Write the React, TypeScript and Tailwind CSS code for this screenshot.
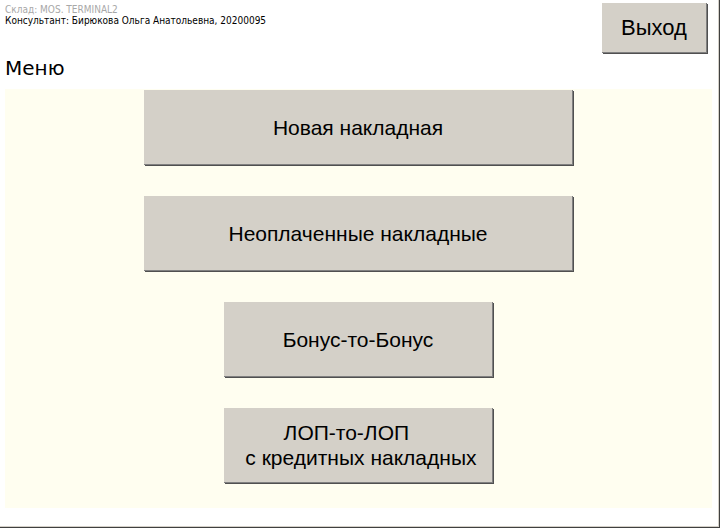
import React from "react";

const items = [
  { label: "Новая накладная", wide: true },
  { label: "Неоплаченные накладные", wide: true },
  { label: "Бонус-то-Бонус", wide: false },
  { label: "ЛОП-то-ЛОП    \n с кредитных накладных", wide: false },
];

function MenuButton({ label, wide }: { label: string; wide: boolean }) {
  return (
    <button
      className={`${wide ? "w-[429px]" : "w-[269px]"} h-[75px] bg-[#d4d0c8] border-r border-b border-[#808080] shadow-[1px_1px_0_#505050] text-[21px] leading-[25px] text-black whitespace-pre font-['Liberation_Sans',Arial,sans-serif] flex items-center justify-center text-center`}
    >
      {label}
    </button>
  );
}

export default function App() {
  return (
    <div className="w-[720px] h-[528px] border-r border-b border-[#404040] bg-white overflow-hidden">
      <div className="h-full border-r border-b border-[#d4d0c8] flex flex-col">
        <div className="flex justify-between items-start pt-[3px] pr-[11px]">
          <div className="pl-[5px] pt-[1px] font-['DejaVu_Sans_Condensed','DejaVu_Sans',Verdana,sans-serif] [font-stretch:semi-condensed] text-[10px] leading-[11px]">
            <div className="text-[#a8a8a8]">Склад: MOS. TERMINAL2</div>
            <div className="text-black">Консультант: Бирюкова Ольга Анатольевна, 20200095</div>
          </div>
          <button className="w-[105px] h-[50px] bg-[#d4d0c8] border-r border-b border-[#808080] shadow-[1px_1px_0_#505050] text-[22px] text-black font-['Liberation_Sans',Arial,sans-serif]">
            Выход
          </button>
        </div>
        <div className="pl-[5px] h-[36px] pt-[4px] leading-[22px] font-['DejaVu_Sans',Verdana,sans-serif] text-[20px] text-black">
          Меню
        </div>
        <div className="mx-[5px] w-[707px] bg-[#fffef0] pb-[25px] flex flex-col items-center gap-[31px] pt-[1px]">
          {items.map((it) => (
            <MenuButton key={it.label} label={it.label} wide={it.wide} />
          ))}
        </div>
      </div>
    </div>
  );
}
